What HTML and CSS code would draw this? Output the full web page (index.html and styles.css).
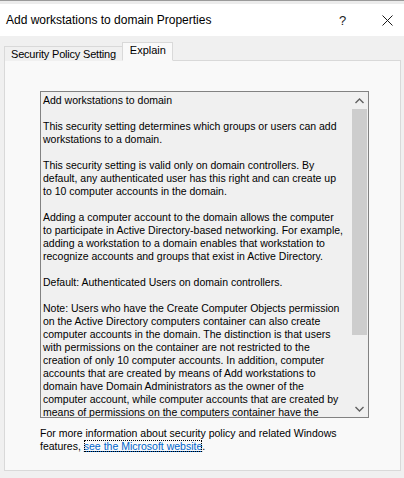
FILE: index.html
```html
<!DOCTYPE html>
<html>
<head>
<meta charset="utf-8">
<link rel="stylesheet" href="styles.css">
</head>
<body>
<div class="window">
  <div class="titlebar">
    <div class="title">Add workstations to domain Properties</div>
    <div class="help">?</div>
    <div class="close">
      <svg width="11" height="11" viewBox="0 0 11 11"><path d="M0.5 0.5 L10.5 10.5 M10.5 0.5 L0.5 10.5" stroke="#1a1a1a" stroke-width="1" fill="none"/></svg>
    </div>
  </div>
  <div class="body">
    <div class="tabs">
      <div class="tab">Security Policy Setting</div>
      <div class="tab selected">Explain</div>
    </div>
    <div class="pane">
      <div class="textbox">
        <div class="text">Add workstations to domain<br><br>This security setting determines which groups or users can add<br>workstations to a domain.<br><br>This security setting is valid only on domain controllers. By<br>default, any authenticated user has this right and can create up<br>to 10 computer accounts in the domain.<br><br>Adding a computer account to the domain allows the computer<br>to participate in Active Directory-based networking. For example,<br>adding a workstation to a domain enables that workstation to<br>recognize accounts and groups that exist in Active Directory.<br><br>Default: Authenticated Users on domain controllers.<br><br>Note: Users who have the Create Computer Objects permission<br>on the Active Directory computers container can also create<br>computer accounts in the domain. The distinction is that users<br>with permissions on the container are not restricted to the<br>creation of only 10 computer accounts. In addition, computer<br>accounts that are created by means of Add workstations to<br>domain have Domain Administrators as the owner of the<br>computer account, while computer accounts that are created by<br>means of permissions on the computers container have the<br>creator as the owner of the computer account.</div>
        <div class="scrollbar">
          <div class="arrow">
            <svg width="9" height="6" viewBox="0 0 9 6"><path d="M0.5 5 L4.5 1 L8.5 5" stroke="#606060" stroke-width="1.4" fill="none"/></svg>
          </div>
          <div class="track"><div class="thumb"></div></div>
          <div class="arrow">
            <svg width="9" height="6" viewBox="0 0 9 6"><path d="M0.5 1 L4.5 5 L8.5 1" stroke="#606060" stroke-width="1.4" fill="none"/></svg>
          </div>
        </div>
      </div>
      <div class="footer">
        <div class="fline">For more information about security policy and related Windows</div>
        <div class="fline">features, <a class="link" href="#">see the Microsoft website</a>.</div>
      </div>
    </div>
  </div>
</div>
</body>
</html>
```
FILE: styles.css
```css
html, body {
  margin: 0;
  padding: 0;
  background: #f0f0f0;
}
.window {
  width: 404px;
  height: 478px;
  display: flex;
  flex-direction: column;
  border-top: 1px solid #9a9a9a;
  box-sizing: border-box;
  overflow: hidden;
}
.titlebar {
  background: #ffffff;
  border-top: 3px solid #ececec;
  height: 32px;
  display: flex;
  align-items: center;
  padding-left: 6px;
  font-family: "Liberation Sans", Arial, sans-serif;
  font-size: 12px;
  color: #000;
}
.title {
  flex: 1;
  padding-bottom: 1px;
}
.help {
  width: 14px;
  margin-right: 29px;
  font-size: 13px;
  color: #222;
}
.close {
  width: 11px;
  margin-right: 11px;
  display: flex;
  align-items: center;
}
.body {
  flex: 1;
  display: flex;
  flex-direction: column;
  padding: 7px 3px 7px 4px;
}
.tabs {
  display: flex;
  align-items: flex-end;
  height: 18px;
  font-family: "Liberation Sans", Arial, sans-serif;
  font-size: 11px;
  position: relative;
  z-index: 1;
  margin-bottom: -1px;
}
.tab {
  height: 14px;
  line-height: 14px;
  padding: 0 6px 0 6px;
  border: 1px solid #d9d9d9;
  border-bottom: none;
  background: #f0f0f0;
  color: #000;
  white-space: nowrap;
  letter-spacing: -0.2px;
}
.tab.selected {
  height: 17px;
  line-height: 15px;
  padding: 0 6px 0 7px;
  letter-spacing: 0;
  background: #f9f9f9;
  border-bottom: 1px solid #f9f9f9;
  margin-left: -1px;
}
.pane {
  flex: 1;
  border: 1px solid #d9d9d9;
  background: #f9f9f9;
  padding: 30px 0 0 35px;
  display: flex;
  flex-direction: column;
}
.textbox {
  width: 329px;
  height: 327px;
  box-sizing: border-box;
  border: 1px solid #828282;
  background: #f0f0f0;
  display: flex;
}
.text {
  flex: 1;
  overflow: hidden;
  white-space: nowrap;
  font-family: "Liberation Sans", Arial, sans-serif;
  font-size: 10.5px;
  line-height: 13px;
  color: #000;
  padding: 2px 0 0 2px;
}
.scrollbar {
  width: 17px;
  display: flex;
  flex-direction: column;
  background: #f0f0f0;
}
.arrow {
  height: 17px;
  display: flex;
  align-items: center;
  justify-content: center;
}
.track {
  flex: 1;
}
.thumb {
  margin: 0 1px;
  height: 226px;
  background: #cdcdcd;
}
.footer {
  margin-top: 9px;
  font-family: "Liberation Sans", Arial, sans-serif;
  font-size: 10.5px;
  color: #000;
}
.fline {
  height: 13px;
  line-height: 12px;
  white-space: nowrap;
}
.link {
  color: #0066cc;
  text-decoration: underline;
  outline: 1px dotted #000;
  outline-offset: -1px;
}
```
